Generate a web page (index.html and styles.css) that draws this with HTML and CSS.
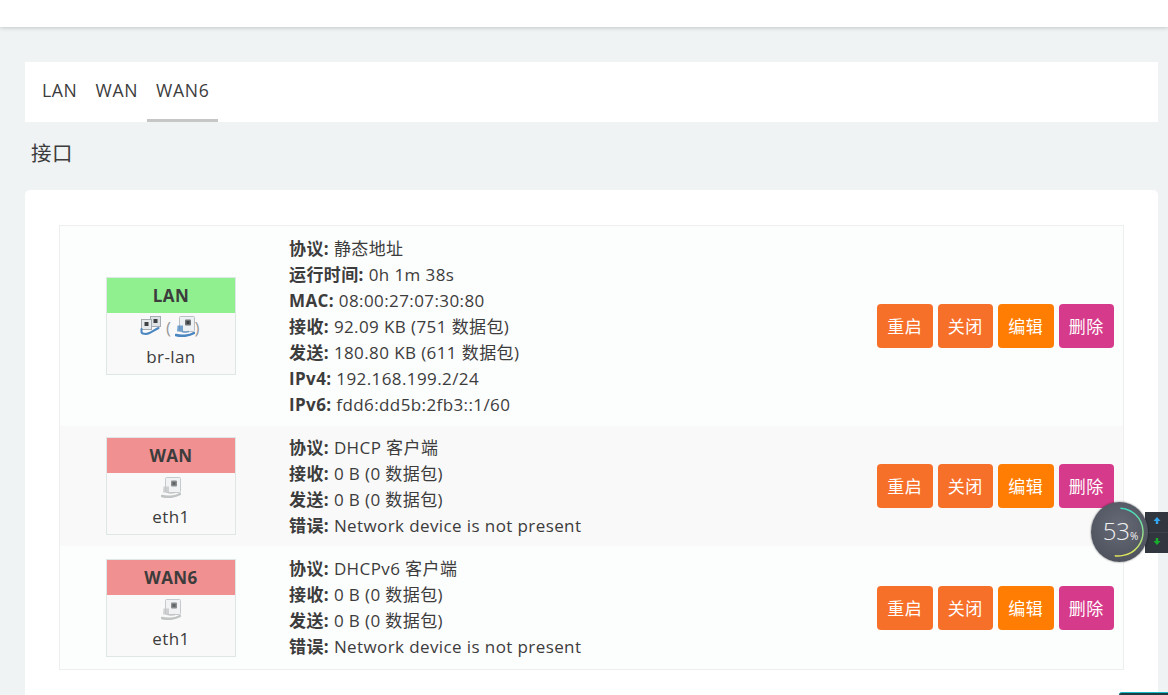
FILE: index.html
```html
<!DOCTYPE html>
<html lang="zh">
<head>
<meta charset="utf-8">
<title>接口</title>
<link rel="stylesheet" href="styles.css">
</head>
<body>
<svg class="defs" width="0" height="0" aria-hidden="true">
  <defs>
    <symbol id="eth" viewBox="0 0 20 21">
      <rect x="4.500" y="0.500" width="15" height="15" rx="1" fill="#eef1f3" stroke="#b9bfc4"/>
      <rect x="10" y="3.500" width="6" height="6" rx="1" fill="#6f7376"/>
      <rect x="11.500" y="5" width="3" height="3" fill="#3c3f42"/>
      <path d="M2.500 9.500h5.500v6H2z" fill="currentColor" opacity=".75"/>
      <path d="M1 19c5 1.600 13 1 18-2" fill="none" stroke="currentColor" stroke-width="2.600" stroke-linecap="round"/>
      <path d="M7 15.500c2 1 4 1 7 0" fill="none" stroke="currentColor" stroke-width="1.500" opacity=".7"/>
    </symbol>
    <symbol id="bridge" viewBox="0 0 21 19">
      <rect x="10.500" y="0.500" width="10" height="10" fill="#dfe3e6" stroke="#a4acb2"/>
      <rect x="13.500" y="3" width="4" height="4" fill="#3f4245"/>
      <rect x="1.500" y="3.500" width="10" height="10" fill="#e7eaec" stroke="#a4acb2"/>
      <rect x="4.500" y="6" width="4" height="4" fill="#3f4245"/>
      <path d="M1.500 13v3c0 2 5 2.500 8 1 3-1.500 5-3 9-5" fill="none" stroke="#4a86c0" stroke-width="2" stroke-linecap="round"/>
    </symbol>
  </defs>
</svg>
<header class="topbar"></header>
<main class="page">
  <nav class="tabs">
    <a class="tab">LAN</a>
    <a class="tab">WAN</a>
    <a class="tab active">WAN6</a>
  </nav>
  <h2 class="title">接口</h2>
  <section class="card">
    <div class="table">
      <div class="row row-first">
        <div class="status-cell">
          <div class="box">
            <div class="box-head up">LAN</div>
            <div class="box-icons">
              <svg class="ic ic-bridge"><use href="#bridge"/></svg>
              <span class="paren">(<svg class="ic ic-blue"><use href="#eth"/></svg>)</span>
            </div>
            <div class="box-name">br-lan</div>
          </div>
        </div>
        <div class="info">
          <div><b>协议:</b> 静态地址</div>
          <div><b>运行时间:</b> 0h 1m 38s</div>
          <div><b>MAC:</b> 08:00:27:07:30:80</div>
          <div><b>接收:</b> 92.09 KB (751 数据包)</div>
          <div><b>发送:</b> 180.80 KB (611 数据包)</div>
          <div><b>IPv4:</b> 192.168.199.2/24</div>
          <div><b>IPv6:</b> fdd6:dd5b:2fb3::1/60</div>
        </div>
        <div class="actions">
          <button class="btn reload">重启</button><button class="btn reload">关闭</button><button class="btn edit">编辑</button><button class="btn del">删除</button>
        </div>
      </div>
      <div class="row row-mid">
        <div class="status-cell">
          <div class="box">
            <div class="box-head down">WAN</div>
            <div class="box-icons"><svg class="ic ic-gray"><use href="#eth"/></svg></div>
            <div class="box-name">eth1</div>
          </div>
        </div>
        <div class="info">
          <div><b>协议:</b> DHCP 客户端</div>
          <div><b>接收:</b> 0 B (0 数据包)</div>
          <div><b>发送:</b> 0 B (0 数据包)</div>
          <div><b>错误:</b> Network device is not present</div>
        </div>
        <div class="actions">
          <button class="btn reload">重启</button><button class="btn reload">关闭</button><button class="btn edit">编辑</button><button class="btn del">删除</button>
        </div>
      </div>
      <div class="row row-last">
        <div class="status-cell">
          <div class="box">
            <div class="box-head down">WAN6</div>
            <div class="box-icons"><svg class="ic ic-gray"><use href="#eth"/></svg></div>
            <div class="box-name">eth1</div>
          </div>
        </div>
        <div class="info">
          <div><b>协议:</b> DHCPv6 客户端</div>
          <div><b>接收:</b> 0 B (0 数据包)</div>
          <div><b>发送:</b> 0 B (0 数据包)</div>
          <div><b>错误:</b> Network device is not present</div>
        </div>
        <div class="actions">
          <button class="btn reload">重启</button><button class="btn reload">关闭</button><button class="btn edit">编辑</button><button class="btn del">删除</button>
        </div>
      </div>
    </div>
  </section>
</main>
<aside class="meter">
  <div class="meter-bar">
    <svg class="arrow" viewBox="0 0 8 8"><path d="M4 0l3.500 4H5.200v3H2.800V4H.5z" fill="#35a7f0"/></svg>
    <svg class="arrow" viewBox="0 0 8 8"><path d="M4 8L.5 4h2.300V1h2.400v3h2.300z" fill="#17b02c"/></svg>
  </div>
  <div class="dial">
    <svg class="ring" viewBox="0 0 60 60">
      <defs><linearGradient id="rg" x1="0" y1="0" x2="0" y2="1"><stop offset="0" stop-color="#3fdcc0"/><stop offset="1" stop-color="#e2e45a"/></linearGradient></defs>
      <path d="M31 5a25 25 0 0 1 3 49.600 26 26 0 0 1-9 .4" fill="none" stroke="url(#rg)" stroke-width="1.500"/>
    </svg>
    <span class="pct">53<small>%</small></span>
  </div>
</aside>
<div class="corner"></div>
</body>
</html>
```
FILE: styles.css
```css
* { box-sizing: border-box; }
html, body { height: 100%; }
body {
  margin: 0;
  overflow: hidden;
  background: #eff3f4;
  color: #3c3c3c;
  font: 17px/26px "Open Sans", "Noto Sans CJK SC", sans-serif;
  letter-spacing: .4px;
}
.defs { position: absolute; }
.topbar {
  height: 27px;
  background: #fff;
  box-shadow: 0 1px 4px rgba(0, 0, 0, .18);
}
.page { padding: 35px 10px 0 25px; }
.tabs {
  display: flex;
  height: 60px;
  padding-left: 8px;
  background: #fff;
}
.tab {
  padding: 15px 9px 0;
  border-bottom: 3px solid transparent;
  font-size: 17.6px;
  letter-spacing: .65px;
}
.tab.active { border-bottom-color: #c6c6c6; }
.title {
  margin: 18px 0 0 6px;
  height: 50px;
  font-size: 20.5px;
  line-height: 27px;
  font-weight: 400;
}
.card {
  height: 520px;
  padding: 35px 34px 0;
  background: #fff;
  border-radius: 5px 5px 0 0;
}
.table { border: 1px solid #eeeeee; }
.row {
  display: flex;
  align-items: center;
  padding-right: 9px;
  background: #fcfdfd;
}
.row-first { padding-top: 9px; padding-bottom: 9px; }
.row-mid { padding-top: 8px; padding-bottom: 8px; background: #f9f9f9; }
.row-last { padding-top: 10px; padding-bottom: 9px; }
.status-cell { width: 222px; flex: none; display: flex; justify-content: center; }
.box {
  width: 130px;
  height: 98px;
  border: 1px solid #dfe6e6;
  background: #f9f9f9;
  text-align: center;
}
.box-head {
  height: 35px;
  font-weight: 700;
  line-height: 36px;
}
.box-icons {
  height: 29px;
  display: flex;
  justify-content: center;
  align-items: center;
  gap: 5px;
  color: #999;
}
.box-head.up { background: #90f090; }
.box-head.down { background: #f09090; }
.paren { display: flex; align-items: center; }
.ic { width: 20px; height: 21px; display: block; }
.ic-bridge { width: 21px; height: 19px; margin-top: -4px; margin-left: -2px; }
.ic-blue { color: #4a86c0; margin: -2px 0 0 3px; }
.ic-gray { color: #b4b8b8; margin-top: -1px; opacity: .8; }
.box-name { line-height: 30px; }
.info { flex: 1; padding-left: 7px; margin-top: 1px; margin-bottom: -1px; }
.row-last .info { margin-top: 0; margin-bottom: 0; }
.info b { font-weight: 700; }
.actions { display: flex; gap: 5px; flex: none; }
.btn {
  width: 55.5px;
  height: 44px;
  padding: 2px 0 0;
  border: 0;
  border-radius: 4px;
  color: #fff;
  font: inherit;
  letter-spacing: inherit;
}
.reload { background: #f6702a; }
.edit { background: #ff7d02; }
.del { background: #d63a8a; }
.meter { position: absolute; left: 1091px; top: 502px; width: 77px; height: 60px; }
.meter-bar {
  position: absolute;
  left: 54px;
  top: 10px;
  width: 23px;
  height: 41px;
  padding: 5px 0 0 8px;
  background: linear-gradient(#31363f 49%, #3d424b 50%, #31363f 52%);
  display: flex;
  flex-direction: column;
  gap: 12px;
}
.arrow { width: 8px; height: 8px; display: block; }
.dial {
  position: absolute;
  inset: 0;
  width: 57px;
  height: 60px;
  padding-left: 2px;
  border-radius: 50%;
  background: radial-gradient(circle at 50% 40%, #666a76, #484c57);
  box-shadow: 0 0 2px rgba(0, 0, 0, .6);
  color: #f2f2f2;
  text-align: center;
  letter-spacing: 0;
  font: 300 24px/57px "Open Sans", sans-serif;
}
.ring { position: absolute; inset: 0; width: 57px; height: 60px; }
.pct small { font-size: 10px; font-weight: 400; }
.corner {
  position: absolute;
  left: 1119px;
  top: 692px;
  width: 49px;
  height: 3px;
  background: #1d3c42;
  border-top: 1px solid #14b8c8;
  border-radius: 8px 0 0 0;
}
```
